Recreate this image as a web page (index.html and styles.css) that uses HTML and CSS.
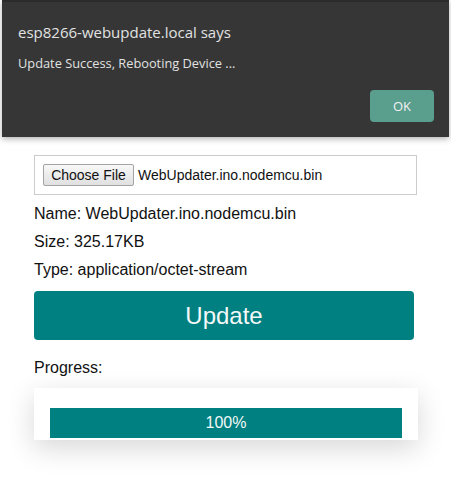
FILE: index.html
```html
<!DOCTYPE html>
<html>
<head>
<meta charset="utf-8">
<link rel="stylesheet" href="styles.css">
</head>
<body>
<div class="page">
  <div class="file-box">
    <span class="choose-btn">Choose File</span>
    <span class="file-name">WebUpdater.ino.nodemcu.bin</span>
  </div>
  <div class="info info-first">Name: WebUpdater.ino.nodemcu.bin</div>
  <div class="info">Size: 325.17KB</div>
  <div class="info">Type: application/octet-stream</div>
  <div class="update-btn">Update</div>
  <div class="progress-label">Progress:</div>
  <div class="progress-card">
    <div class="progress-bar">100%</div>
  </div>
</div>
<div class="dialog">
  <div class="dialog-title">esp8266-webupdate.local says</div>
  <div class="dialog-msg">Update Success, Rebooting Device ...</div>
  <div class="dialog-actions">
    <span class="ok-btn">OK</span>
  </div>
</div>
</body>
</html>
```
FILE: styles.css
```css
html, body {
  margin: 0;
  padding: 0;
  background: #ffffff;
}
body {
  font-family: "Liberation Sans", Arial, sans-serif;
  color: #111;
  width: 451px;
  height: 477px;
  overflow: hidden;
  position: relative;
}
.page {
  padding: 155px 0 0 34px;
  width: 384px;
}
.file-box {
  box-sizing: border-box;
  width: 383px;
  height: 40px;
  border: 1px solid #cccccc;
  display: flex;
  align-items: center;
  padding-left: 8px;
  font-size: 14px;
}
.choose-btn {
  box-sizing: border-box;
  display: inline-flex;
  align-items: center;
  justify-content: center;
  width: 91px;
  height: 22px;
  border: 1px solid #a3a3a3;
  border-radius: 2px;
  background: linear-gradient(#f8f8f8, #e0e0e0);
  color: #111;
  font-size: 14px;
}
.file-name {
  margin-left: 4px;
  color: #111;
}
.info {
  font-size: 16px;
  line-height: 28px;
}
.info-first {
  margin-top: 5px;
}
.update-btn {
  margin-top: 7px;
  width: 380px;
  height: 49px;
  background: #008080;
  border-radius: 4px;
  color: #f4f8f8;
  font-size: 24px;
  display: flex;
  align-items: center;
  justify-content: center;
}
.progress-label {
  margin-top: 14px;
  font-size: 16px;
  line-height: 28px;
}
.progress-card {
  margin-top: 6px;
  width: 384px;
  height: 52px;
  box-sizing: border-box;
  padding: 20px 16px 2px 16px;
  background: #fff;
  box-shadow: 0 8px 28px rgba(0, 0, 0, 0.16);
}
.progress-bar {
  height: 30px;
  background: #008080;
  color: #f4f8f8;
  font-size: 16px;
  display: flex;
  align-items: center;
  justify-content: center;
}
.dialog {
  position: absolute;
  left: 2px;
  top: 0;
  width: 447px;
  height: 137px;
  box-sizing: border-box;
  background: #363636;
  border-top: 2px solid #2b2b2b;
  box-shadow: 0 2px 6px rgba(0, 0, 0, 0.3);
  font-family: "Open Sans", "Noto Sans", sans-serif;
  padding: 20px 15px 0 16px;
  display: flex;
  flex-direction: column;
}
.dialog-title {
  color: #e2e2e2;
  font-size: 15px;
  line-height: 20px;
}
.dialog-msg {
  margin-top: 12px;
  color: #e2e2e2;
  font-size: 12.8px;
  line-height: 18px;
}
.dialog-actions {
  margin-top: 18px;
  display: flex;
  justify-content: flex-end;
}
.ok-btn {
  width: 64px;
  height: 32px;
  border-radius: 4px;
  background: #5a9e8e;
  color: #f2f2f2;
  font-size: 13px;
  display: flex;
  align-items: center;
  justify-content: center;
}
```
